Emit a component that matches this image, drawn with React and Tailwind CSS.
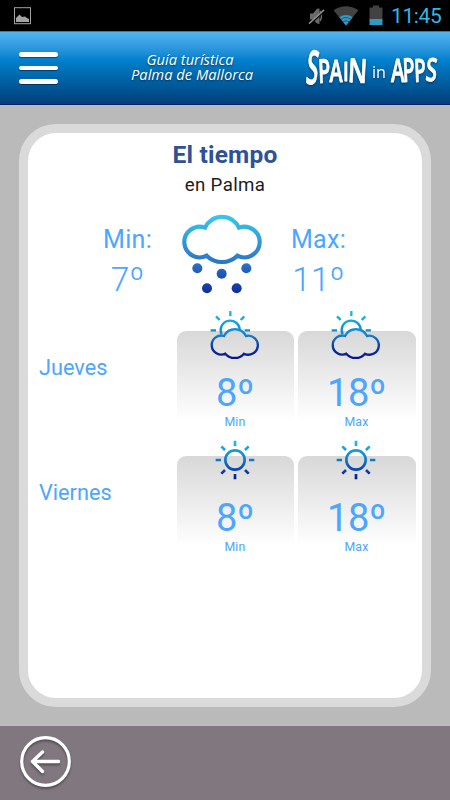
const FORECAST = [
  { day: 'Jueves', icon: 'cloudy', min: 8, max: 18 },
  { day: 'Viernes', icon: 'sunny', min: 8, max: 18 },
]

function StatusBar() {
  return (
    <div className="flex h-[31px] items-start bg-black">
      <svg className="ml-[14px] mt-[7px]" width="17" height="18" viewBox="0 0 17 18">
        <rect x="0.5" y="0.7" width="16" height="16" fill="none" stroke="#a3a3a3" />
        <path d="M2 15V11L5.500 7.500 8 10 11 9.500 13 11 15 12V15Z" fill="#a3a3a3" />
      </svg>
      {/* Muted ringer */}
      <svg className="ml-auto mt-[7px]" width="17" height="19" viewBox="0 0 17 19">
        <path d="M2 6.500H5L9 1.800 11.500 1.500V17L9 16.500 5 12.500H2Z" fill="#686868" />
        <path d="M12 4Q15 9 12 14" fill="none" stroke="#686868" strokeWidth="1.500" />
        <path d="M2 17.500 16.500 4" stroke="#000" strokeWidth="1.500" />
        <path d="M1 16.700 16 2.900" stroke="#8a8a8a" strokeWidth="1.600" />
      </svg>
      <svg className="ml-[8px] mt-[6px]" width="26" height="20" viewBox="0 0 26 20">
        <path d="M0.500 4.300Q13-4 25.500 4.300L13 19.500Z" fill="#424242" />
        <path d="M6.300 11.300Q13 6.500 19.700 11.300L13 19.500Z" fill="#2f9ac2" />
        <path d="M7.800 13.300Q13 9.800 18.200 13.300M9.800 15.800Q13 13.700 16.200 15.800" fill="none" stroke="#164e63" strokeWidth="0.800" />
      </svg>
      <svg className="ml-[10px] mt-[5px]" width="14" height="20" viewBox="0 0 14 20">
        <path d="M0.500 2.500H4V0.500H10V2.500H13.500V14H0.500Z" fill="#424242" />
        <path d="M0.500 14H13.500V20H0.500Z" fill="#2f9ac2" />
      </svg>
      <span className="ml-[8px] mr-[8px] mt-[1px] w-[51px] whitespace-nowrap text-[21px] leading-[31px] tracking-[-0.400px] text-[#33b5e5]">11:45</span>
    </div>
  )
}

function Logo() {
  return (
    <svg
      className="absolute right-0 top-0 drop-shadow-[0_1px_1px_rgba(0,0,0,0.45)]"
      width="160" height="72" viewBox="290 32 160 72"
      fill="#fff" fontFamily="'Open Sans', sans-serif" fontWeight="600"
    >
      <g stroke="#fff" strokeWidth="0.900" strokeLinejoin="round">
        <text transform="translate(305 83.500) rotate(6) scale(0.470 1)" fontSize="47">S</text>
        <text transform="translate(318.500 83) rotate(-2) scale(0.600 1)" fontSize="33">P</text>
        <text transform="translate(329.500 82) scale(0.640 1)" fontSize="31">A</text>
        <text transform="translate(343 81) scale(0.700 1)" fontSize="27">I</text>
        <text transform="translate(347.500 82) rotate(3) scale(0.740 1)" fontSize="33">N</text>
        <text transform="translate(391 82) scale(0.640 1)" fontSize="32">A</text>
        <text transform="translate(403 82) rotate(-2) scale(0.590 1)" fontSize="33">P</text>
        <text transform="translate(414.500 82) rotate(-2) scale(0.590 1)" fontSize="32">P</text>
        <text transform="translate(425 80.500) rotate(5) scale(0.640 1)" fontSize="32">S</text>
      </g>
      <text x="372" y="77.500" fontSize="17" fontWeight="400" textLength="14" lengthAdjust="spacingAndGlyphs">in</text>
    </svg>
  )
}

function Header() {
  return (
    <header className="relative flex h-[74px] items-center border-b border-b-[#00216e] border-t border-t-[#2783b5] bg-linear-to-b from-[#50b5f0] via-[#0082cf] via-38% to-[#003f79]">
      <button aria-label="Menú" className="ml-[19px] flex flex-col gap-[9px]">
        <span className="h-[4.500px] w-[39px] rounded-full bg-white shadow-[0_1px_1px_rgba(0,0,0,0.45)]" />
        <span className="h-[4.500px] w-[39px] rounded-full bg-white shadow-[0_1px_1px_rgba(0,0,0,0.45)]" />
        <span className="h-[4.500px] w-[39px] rounded-full bg-white shadow-[0_1px_1px_rgba(0,0,0,0.45)]" />
      </button>
      <h1 className="mb-[2px] ml-[63px] w-[142px] text-center font-['Open_Sans',sans-serif] text-[14.700px] italic leading-[15px] text-white [text-shadow:0_1px_2px_rgba(0,0,0,0.5)]">
        <span className="mr-[4px]">Guía turística</span><br />
        <span className="whitespace-nowrap">Palma de Mallorca</span>
      </h1>
      <Logo />
    </header>
  )
}

function SnowCloud() {
  return (
    <svg width="80" height="80" viewBox="36 27 240 240">
      <defs>
        <linearGradient id="snow" gradientUnits="userSpaceOnUse" x1="0" y1="30" x2="0" y2="265">
          <stop offset="0" stopColor="#38c8f0" />
          <stop offset="0.600" stopColor="#2a76c6" />
          <stop offset="1" stopColor="#102c9c" />
        </linearGradient>
      </defs>
      <path
        d="M105 68A56 56 0 0 1 207 68A46 46 0 1 1 202 152A65 65 0 0 1 110 152A46 46 0 1 1 105 68Z"
        fill="none" stroke="url(#snow)" strokeWidth="12.500"
      />
      <g fill="url(#snow)">
        <circle cx="82" cy="190" r="15" />
        <circle cx="155" cy="206" r="15" />
        <circle cx="229" cy="190" r="15" />
        <circle cx="111" cy="250" r="15" />
        <circle cx="200" cy="250" r="15" />
      </g>
    </svg>
  )
}

function DayIcon({ type, id }) {
  if (type === 'cloudy') {
    return (
      <svg className="absolute left-[33px] top-[-21px]" width="50" height="50" viewBox="120 30 150 150">
        <defs>
          <linearGradient id={id} gradientUnits="userSpaceOnUse" x1="0" y1="33" x2="0" y2="177">
            <stop offset="0" stopColor="#10c0ee" />
            <stop offset="0.500" stopColor="#1680cb" />
            <stop offset="0.750" stopColor="#0838a8" />
            <stop offset="1" stopColor="#06128e" />
          </linearGradient>
        </defs>
        <g fill="none" stroke={`url(#${id})`} strokeWidth="7">
          <path d="M162 108A37 37 0 0 1 228 108A28.500 28.500 0 1 1 222 161A37 37 0 0 1 166 161A28.500 28.500 0 1 1 162 108Z" />
          <path d="M155 103A28.500 28.500 0 1 1 209 91" />
          <path d="M181.010 33L181 48M138 49 149 60M223 49 212 60M122 91.010 138 91M224 91.010 240 91" />
        </g>
      </svg>
    )
  }
  return (
    <svg className="absolute left-[38px] top-[-16px]" width="40" height="40" viewBox="135 31 120 120">
      <defs>
        <linearGradient id={id} gradientUnits="userSpaceOnUse" x1="0" y1="32" x2="0" y2="150">
          <stop offset="0" stopColor="#16c4f0" />
          <stop offset="0.500" stopColor="#1478c6" />
          <stop offset="0.850" stopColor="#0830a4" />
          <stop offset="1" stopColor="#06148e" />
        </linearGradient>
      </defs>
      <g fill="none" stroke={`url(#${id})`} strokeWidth="8">
        <circle cx="195" cy="91" r="29" />
        <path d="M195.010 33L195 49M195.010 133L195 149M137 91.010 153 91M237 91.010 253 91M154 50 165 61M236 50 225 61M154 132 165 121M236 132 225 121" />
      </g>
    </svg>
  )
}

function TempCard({ icon, id, value, label }) {
  return (
    <div className="relative h-[125px] text-center text-[#4ca6ff]">
      <div className="h-[90px] rounded-t-[9px] bg-linear-to-b from-[#d8d8d8] to-white pr-px pt-[42px]">
        <p className="text-[38px] leading-[40px] tracking-[-0.400px]">{value}º</p>
        <p className="mt-px text-[12.300px] leading-[16px] tracking-[0.200px]">{label}</p>
      </div>
      <DayIcon type={icon} id={id} />
    </div>
  )
}

function Current({ label, value }) {
  return (
    <div className="w-[71px] text-center text-[#4ca6ff]">
      <p className="text-[25px] leading-[40px] tracking-[0.300px]">{label}:</p>
      <p className="text-[33.500px] font-[360] leading-[40px]">{value}º</p>
    </div>
  )
}

export default function App() {
  return (
    <div className="flex h-[800px] w-[450px] flex-col overflow-hidden bg-[#bababa] font-[Roboto,sans-serif]">
      <StatusBar />
      <Header />
      <main className="flex-1 px-[19px] pt-[19px]">
        <section className="h-[583px] rounded-[37px] border-[9px] border-[#dadada] bg-white pt-[6px]">
          <h2 className="text-center text-[24.500px] font-bold leading-[32px] tracking-[0.200px] text-[#2f5195]">El tiempo</h2>
          <p className="mt-[2px] text-center text-[18.700px] leading-[24px] tracking-[0.350px] text-[#1c1c1c]">en Palma</p>
          <div className="mt-[23px] flex pl-[64px]">
            <Current label="Min" value={7} />
            <div className="-mt-[6px] ml-[19px] mr-[21px]"><SnowCloud /></div>
            <Current label="Max" value={11} />
          </div>
          <div className="mt-[31px]">
            {FORECAST.map((f) => (
              <div key={f.day} className="flex pl-[11px] pr-[6px]">
                <h3 className="w-[138px] pt-[22px] text-[21.700px] leading-[30px] text-[#4ca6ff]">{f.day}</h3>
                <div className="grid flex-1 grid-cols-[117px_118px] gap-[4px]">
                  <TempCard icon={f.icon} id={`${f.day}-min`} value={f.min} label="Min" />
                  <TempCard icon={f.icon} id={`${f.day}-max`} value={f.max} label="Max" />
                </div>
              </div>
            ))}
          </div>
        </section>
      </main>
      <footer className="h-[74px] bg-[#80787e] pl-[19px] pt-[9px]">
        <button aria-label="Volver" className="block">
          <svg className="drop-shadow-[0_2px_1px_rgba(0,0,0,0.35)]" width="53" height="53" viewBox="0 0 53 53" fill="none" stroke="#fff" strokeLinecap="round" strokeLinejoin="round">
            <circle cx="26.500" cy="26.500" r="23.800" strokeWidth="3.200" />
            <path d="M39.500 26.500H13.500M23.500 17 13.500 26.500 23.500 36.500" strokeWidth="3.400" />
          </svg>
        </button>
      </footer>
    </div>
  )
}
